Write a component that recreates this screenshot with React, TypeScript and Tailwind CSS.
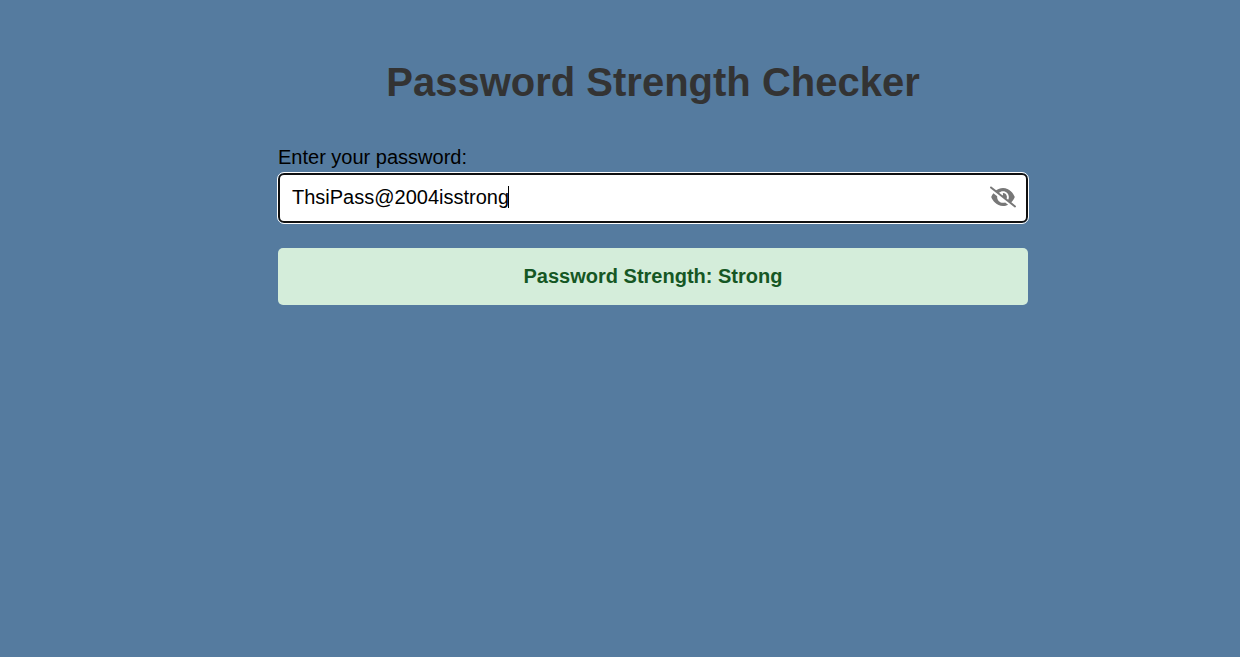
import { useEffect, useRef, useState } from "react";
import { FaEye, FaEyeSlash } from "react-icons/fa6";

function rate(password: string) {
  const rules = [/[a-z]/, /[A-Z]/, /\d/, /[^A-Za-z0-9]/];
  const score = rules.filter((rule) => rule.test(password)).length;
  if (password.length >= 8 && score === 4) return "Strong";
  if (password.length >= 6 && score >= 2) return "Medium";
  return "Weak";
}

const tones: Record<string, string> = {
  Strong: "bg-[#d4edda] text-[#155724]",
  Medium: "bg-[#fff3cd] text-[#856404]",
  Weak: "bg-[#f8d7da] text-[#721c24]",
};

// Width of the text before the cursor, in the font of the field.
function measure(field: HTMLInputElement) {
  const context = document.createElement("canvas").getContext("2d");
  if (!context) return 0;
  const style = getComputedStyle(field);
  context.font = `${style.fontSize} ${style.fontFamily}`;
  const typed = field.value.slice(0, field.selectionEnd ?? field.value.length);
  const shown = field.type === "password" ? "•".repeat(typed.length) : typed;
  return Math.round(context.measureText(shown).width) - field.scrollLeft;
}

export default function App() {
  const [password, setPassword] = useState("ThsiPass@2004isstrong");
  const [visible, setVisible] = useState(true);
  const [caret, setCaret] = useState(0);
  const input = useRef<HTMLInputElement>(null);

  const placeCaret = () => {
    if (input.current) setCaret(measure(input.current));
  };

  useEffect(() => {
    const field = input.current;
    field?.focus();
    field?.setSelectionRange(field.value.length, field.value.length);
  }, []);

  useEffect(placeCaret, [password, visible]);

  const strength = rate(password);

  return (
    <div className="min-h-screen bg-[#557b9f] pt-14 pl-[66px] font-['Liberation_Sans',Arial,sans-serif] text-xl text-black">
      <main className="mx-auto w-full max-w-[750px]">
        <h1 className="text-center text-[40px] leading-[52px] font-bold text-[#333]">
          Password Strength Checker
        </h1>
        <label htmlFor="password" className="mt-[37px] block leading-6">
          Enter your password:
        </label>
        <div className="relative mt-1">
          <input
            id="password"
            ref={input}
            type={visible ? "text" : "password"}
            value={password}
            onChange={(e) => setPassword(e.target.value)}
            onSelect={placeCaret}
            spellCheck={false}
            className="peer block h-[50px] w-full rounded-md border-2 border-[#101010] bg-white pr-12 pb-0.5 pl-3 caret-transparent outline-1 outline-white"
          />
          <span
            aria-hidden="true"
            className="pointer-events-none absolute inset-y-0 left-[13px] hidden items-center pb-0.5 peer-focus:flex"
            style={{ marginLeft: caret }}
          >
            <span className="h-[22px] w-px bg-black" />
          </span>
          <button
            type="button"
            aria-label={visible ? "Hide password" : "Show password"}
            onClick={() => setVisible(!visible)}
            className="absolute inset-y-0 right-3 flex items-center pb-0.5 text-[#777]"
          >
            {visible ? <FaEyeSlash size={26} /> : <FaEye size={26} />}
          </button>
        </div>
        <p className={`mt-[25px] rounded-[5px] py-4 text-center leading-[25px] font-bold ${tones[strength]}`}>
          Password Strength: {strength}
        </p>
      </main>
    </div>
  );
}
